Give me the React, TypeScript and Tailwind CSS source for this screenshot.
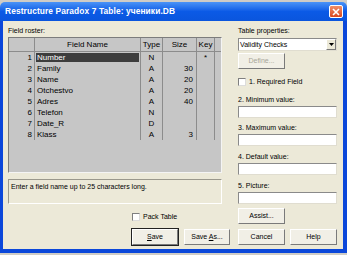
import React from 'react';

const rows = [
  { n: 1, name: 'Number', type: 'N', size: '', key: '*' },
  { n: 2, name: 'Family', type: 'A', size: '30', key: '' },
  { n: 3, name: 'Name', type: 'A', size: '20', key: '' },
  { n: 4, name: 'Otchestvo', type: 'A', size: '20', key: '' },
  { n: 5, name: 'Adres', type: 'A', size: '40', key: '' },
  { n: 6, name: 'Telefon', type: 'N', size: '', key: '' },
  { n: 7, name: 'Date_R', type: 'D', size: '', key: '' },
  { n: 8, name: 'Klass', type: 'A', size: '3', key: '' },
];

const Btn = ({ label, className = '', disabled = false, isDefault = false }: { label: React.ReactNode; className?: string; disabled?: boolean; isDefault?: boolean }) => (
  <div
    className={`h-[16px] flex items-center justify-center text-[7px] bg-[#f1efe6] border border-t-[#ffffff] border-l-[#ffffff] border-r-[#7a7a7a] border-b-[#7a7a7a] ${
      isDefault ? 'outline outline-1 outline-[#222]' : ''
    } ${disabled ? 'text-[#a8a698]' : 'text-black'} ${className}`}
  >
    {label}
  </div>
);

const Field = ({ label, gap }: { label: string; gap: string }) => (
  <>
    <div className={`h-[12px] leading-[12px] text-[7px] ${gap}`}>{label}</div>
    <div className="h-[12px] bg-white border border-t-[#8a8a8a] border-l-[#8a8a8a] border-r-[#e0ddd0] border-b-[#e0ddd0]" />
  </>
);

const CheckBox = () => (
  <div className="w-[8px] h-[8px] bg-white border border-t-[#7f7f7f] border-l-[#7f7f7f] border-r-[#dcdcdc] border-b-[#dcdcdc]" />
);

export default function App() {
  return (
    <div className="w-[347px] h-[255px] bg-[#cfccc6] pt-[2px] overflow-hidden font-['Liberation_Sans',Arial,sans-serif] text-black">
      <div className="h-[251px] flex flex-col">
        {/* title bar */}
        <div className="h-[19px] flex items-center justify-between pl-[5px] pr-[4px] rounded-t-[5px] bg-gradient-to-b from-[#4a93f7] via-[#0b5ae6] to-[#0a55dd]">
          <span className="text-white font-bold text-[8.4px] tracking-[0.1px]">Restructure Paradox 7 Table: ученики.DB</span>
          <div className="w-[14px] h-[13px] rounded-[2px] border border-white bg-gradient-to-b from-[#f08e66] to-[#d8461c] flex items-center justify-center">
            <svg width="8" height="8" viewBox="0 0 8 8">
              <path d="M1 1 L7 7 M7 1 L1 7" stroke="white" strokeWidth="1.6" />
            </svg>
          </div>
        </div>

        {/* body */}
        <div className="flex-1 flex flex-col bg-[#ece9d8] border-l-[3px] border-r-[4px] border-b-[4px] border-[#0b47da]">
          <div className="flex pl-[5px] pt-[3px]">
            {/* left column */}
            <div className="w-[214px] flex flex-col">
              <div className="h-[13px] leading-[13px] text-[7px]">Field roster:</div>
              <div className="h-[136px] bg-[#c6c6c6] border border-t-[#7c7c7c] border-l-[#7c7c7c] border-r-[#f4f4f4] border-b-[#f4f4f4] text-[8px]">
                <div className="grid grid-cols-[26px_106px_22px_34px_18px_1fr] h-[14px] border-b border-[#8c8c8c]">
                  <div className="border-r border-[#8c8c8c]" />
                  <div className="border-r border-[#8c8c8c] flex items-center justify-center">Field Name</div>
                  <div className="border-r border-[#8c8c8c] flex items-center justify-center">Type</div>
                  <div className="border-r border-[#8c8c8c] flex items-center justify-center">Size</div>
                  <div className="border-r border-[#8c8c8c] flex items-center justify-center">Key</div>
                  <div />
                </div>
                {rows.map((r) => (
                  <div key={r.n} className="grid grid-cols-[26px_106px_22px_34px_18px_1fr] h-[11px] leading-[11px]">
                    <div className="border-r border-[#8c8c8c] text-right pr-[2px]">{r.n}</div>
                    <div className="border-r border-[#8c8c8c] p-[1px]">
                      <div className={`h-[9px] leading-[9px] pl-[1px] ${r.n === 1 ? 'bg-[#3d3d3d] text-white' : ''}`}>{r.name}</div>
                    </div>
                    <div className="border-r border-[#8c8c8c] text-center">{r.type}</div>
                    <div className="border-r border-[#8c8c8c] text-right pr-[3px]">{r.size}</div>
                    <div className="border-r border-[#8c8c8c] text-center">{r.key}</div>
                    <div />
                  </div>
                ))}
              </div>
              <div className="mt-[6px] h-[25px] border border-t-[#9a988c] border-l-[#9a988c] border-r-[#ffffff] border-b-[#ffffff] text-[7px] pl-[2px] pt-[2px] leading-[10px]">
                Enter a field name up to 25 characters long.
              </div>
              <div className="mt-[8px] h-[10px] flex items-center gap-[3px] pl-[124px] text-[7px]">
                <CheckBox />
                <span>Pack Table</span>
              </div>
            </div>

            {/* right column */}
            <div className="ml-[16px] w-[99px] flex flex-col">
              <div className="h-[13px] leading-[13px] text-[7px]">Table properties:</div>
              <div className="mt-[1px] h-[13px] flex bg-white border border-t-[#8a8a8a] border-l-[#8a8a8a] border-r-[#e0ddd0] border-b-[#e0ddd0]">
                <div className="flex-1 text-[7px] leading-[11px] pl-[1px]">Validity Checks</div>
                <div className="w-[10px] bg-[#ece9d8] border border-t-white border-l-white border-r-[#7a7a7a] border-b-[#7a7a7a] flex items-center justify-center">
                  <svg width="5" height="3" viewBox="0 0 5 3">
                    <path d="M0 0 H5 L2.5 3 Z" fill="black" />
                  </svg>
                </div>
              </div>
              <Btn label="Define..." disabled className="mt-[2px] w-[47px] h-[15px]" />
              <div className="mt-[8px] h-[10px] flex items-center gap-[3px] text-[7px]">
                <CheckBox />
                <span>1. Required Field</span>
              </div>
              <Field label="2. Minimum value:" gap="mt-[7px]" />
              <Field label="3. Maximum value:" gap="mt-[4px]" />
              <Field label="4. Default value:" gap="mt-[5px]" />
              <Field label="5. Picture:" gap="mt-[5px]" />
              <Btn label="Assist..." className="mt-[4px] w-[47px] h-[15px]" />
            </div>
          </div>

          {/* button row */}
          <div className="mt-[5px] flex pl-[129px]">
            <Btn label={<span><u>S</u>ave</span>} isDefault className="w-[46px]" />
            <Btn label={<span>Save <u>A</u>s...</span>} className="ml-[6px] w-[46px]" />
            <Btn label="Cancel" className="ml-[8px] w-[47px]" />
            <Btn label="Help" className="ml-[5px] w-[47px]" />
          </div>
        </div>
      </div>
    </div>
  );
}
